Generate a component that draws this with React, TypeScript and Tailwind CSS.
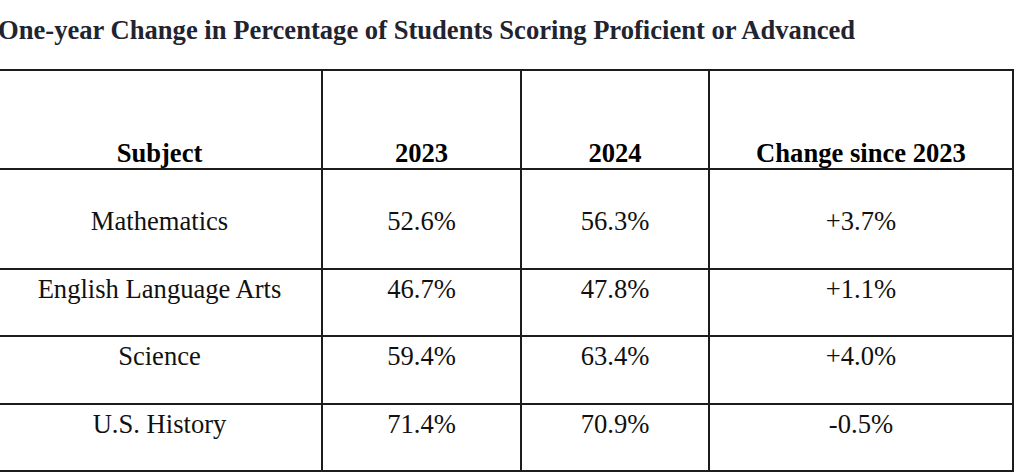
const rows = [
    { subject: "Mathematics", y2023: "52.6%", y2024: "56.3%", change: "+3.7%" },
    { subject: "English Language Arts", y2023: "46.7%", y2024: "47.8%", change: "+1.1%" },
    { subject: "Science", y2023: "59.4%", y2024: "63.4%", change: "+4.0%" },
    { subject: "U.S. History", y2023: "71.4%", y2024: "70.9%", change: "-0.5%" },
]

export default function App() {
    return (
        <div className="min-h-screen bg-white font-['Liberation_Serif','Times_New_Roman',serif] overflow-hidden">
            <div className="-ml-[4px] pt-[15px]">
                <h2 className="ml-[2px] text-[26.6px] leading-[30px] font-bold text-[#1f2430]">
                    One-year Change in Percentage of Students Scoring Proficient or Advanced
                </h2>
                <table className="mt-[24px] w-[1016px] table-fixed border-collapse text-[26.6px] leading-[30px] text-[#111]">
                    <colgroup>
                        <col className="w-[325px]" />
                        <col className="w-[199px]" />
                        <col className="w-[188px]" />
                        <col className="w-[304px]" />
                    </colgroup>
                    <thead>
                        <tr className="h-[99px]">
                            {["Subject", "2023", "2024", "Change since 2023"].map((h) => (
                                <th key={h} className="border-2 border-[#1c1c1c] p-0 align-bottom text-center font-bold text-black">
                                    {h}
                                </th>
                            ))}
                        </tr>
                    </thead>
                    <tbody>
                        {rows.map((r, i) => (
                            <tr key={r.subject} className={i === 0 ? "h-[100px]" : i === 2 ? "h-[68px]" : "h-[67px]"}>
                                {[r.subject, r.y2023, r.y2024, r.change].map((v, j) => (
                                    <td
                                        key={j}
                                        className={`border-2 border-[#1c1c1c] p-0 align-top text-center font-normal ${i === 0 ? "pt-[36px]" : "pt-[4px]"}`}
                                    >
                                        {v}
                                    </td>
                                ))}
                            </tr>
                        ))}
                    </tbody>
                </table>
            </div>
        </div>
    )
}
